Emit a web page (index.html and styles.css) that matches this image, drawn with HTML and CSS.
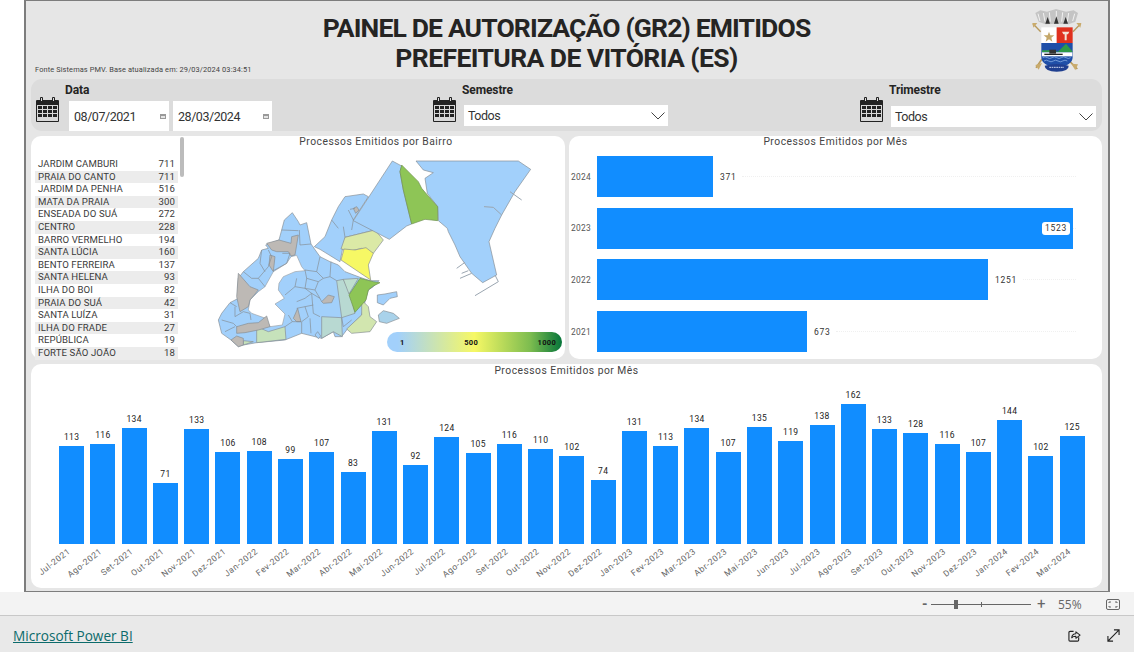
FILE: index.html
```html
<!DOCTYPE html>
<html lang="pt-BR">
<head>
<meta charset="utf-8">
<title>Painel de Autorização</title>
<link rel="stylesheet" href="styles.css">
</head>
<body>
<svg class="defs" width="0" height="0">
  <defs>
    <symbol id="cal" viewBox="0 0 23 26">
      <rect x="0" y="4" width="23" height="22" rx="1" fill="#222"/>
      <rect x="4" y="1" width="3" height="6" rx="1" fill="#222"/>
      <rect x="16" y="1" width="3" height="6" rx="1" fill="#222"/>
      <rect x="5" y="2" width="1" height="3" fill="#ddd"/>
      <rect x="17" y="2" width="1" height="3" fill="#ddd"/>
      <rect x="1" y="9" width="21" height="16" fill="#d8d8d8"/>
      <g fill="#222">
        <rect x="2" y="10" width="4" height="3"/><rect x="7" y="10" width="4" height="3"/><rect x="12" y="10" width="4" height="3"/><rect x="17" y="10" width="4" height="3"/>
        <rect x="2" y="14" width="4" height="3"/><rect x="7" y="14" width="4" height="3"/><rect x="12" y="14" width="4" height="3"/><rect x="17" y="14" width="4" height="3"/>
        <rect x="2" y="18" width="4" height="3"/><rect x="7" y="18" width="4" height="3"/><rect x="12" y="18" width="4" height="3"/><rect x="17" y="18" width="4" height="3"/>
      </g>
    </symbol>
    <symbol id="mini" viewBox="0 0 6 5">
      <rect width="6" height="5" fill="#9a9a9a"/><rect x="1" y="2" width="4" height="2" fill="#e4e4e4"/>
    </symbol>
    <symbol id="chev" viewBox="0 0 14 8">
      <path d="M0.5 0.5 L7 7 L13.5 0.5" fill="none" stroke="#444" stroke-width="1"/>
    </symbol>
  </defs>
</svg>

<main class="frame">
  <header class="head">
    <p class="source">Fonte Sistemas PMV. Base atualizada em: 29/03/2024 03:34:51</p>
    <h1 class="title">PAINEL DE AUTORIZAÇÃO (GR2) EMITIDOS<br><span class="title-2">PREFEITURA DE VITÓRIA (ES)</span></h1>
    <svg class="crest" viewBox="160 25 150 195">
      <path d="M170 40 L185 32 L205 36 L232 28 L262 36 L285 32 L298 40 L290 66 L270 74 L235 72 L200 74 L180 66Z" fill="#c4c4c4"/>
      <path d="M178 42l6 22M194 40l5 26M212 38l3 28M233 34v32M252 38l-3 28M270 40l-4 26M288 42l-6 22" stroke="#f2f2f2" stroke-width="3"/>
      <path d="M200 72 L207 52 L214 72ZM226 72 L233 50 L240 72ZM254 72 L261 52 L268 72Z" fill="#333"/>
      <path d="M163 72 L186 96" stroke="#b89a5c" stroke-width="4"/>
      <path d="M161 70 l15 0 l-12 14Z" fill="#c9ab6c"/>
      <path d="M306 72 L283 96" stroke="#b89a5c" stroke-width="4"/>
      <path d="M308 70 l-15 0 l12 14Z" fill="#c9ab6c"/>
      <path d="M190 178 L172 204" stroke="#b89a5c" stroke-width="5"/>
      <path d="M170 196 l20 -6 l-10 20Z" fill="#c9ab6c"/>
      <path d="M268 180 L296 208" stroke="#b89a5c" stroke-width="5"/>
      <path d="M298 194 l-20 -2 l12 20Z" fill="#c9ab6c"/>
      <path d="M188 83 H234 V130 H188Z" fill="#fff"/>
      <path d="M234 83 H282 V130 H234Z" fill="#e0301e"/>
      <path d="M188 130 H282 V172 Q282 198 235 204 Q188 198 188 172Z" fill="#1f4fa8"/>
      <path d="M190 152 L215 152 L238 156 L262 132 L281 155 V158 H190Z" fill="#2e9a48"/>
      <path d="M190 158 H281 V170 H190Z" fill="#fff"/>
      <path d="M197 162 H252 V166 H197Z" fill="#222"/>
      <path d="M212 150 h20 v12 h-20Z" fill="#333"/>
      <path d="M192 174 q7 -5 14 0 t14 0 t14 0 t14 0 t14 0 t14 0 M196 184 q7 -5 14 0 t14 0 t14 0 t14 0 t14 0" fill="none" stroke="#9cc0ee" stroke-width="2"/>
      <path d="M211 96 l4 11 h12 l-9 7 3 12 -10 -7 -10 7 3 -12 -9 -7 h12Z" fill="#c4a76a"/>
      <path d="M250 96 h22 l-4 8 h-14Z M258 104 h6 v18 h-6Z" fill="#f3e2d6"/>
      <path d="M198 198 Q234 188 270 198 Q272 214 234 216 Q198 214 198 198Z" fill="#1f3f90"/>
      <path d="M212 203 H256" stroke="#cfd8ef" stroke-width="3" stroke-dasharray="5 2"/>
    </svg>
  </header>

  <section class="filters">
    <div class="filter">
      <svg class="calendar"><use href="#cal"/></svg>
      <div class="filter-body">
        <div class="filter-label">Data</div>
        <div class="dates">
          <div class="date"><span>08/07/2021</span><svg class="mini"><use href="#mini"/></svg></div>
          <div class="date"><span>28/03/2024</span><svg class="mini"><use href="#mini"/></svg></div>
        </div>
      </div>
    </div>
    <div class="filter">
      <svg class="calendar"><use href="#cal"/></svg>
      <div class="filter-body">
        <div class="filter-label">Semestre</div>
        <div class="select"><span>Todos</span><svg class="chev"><use href="#chev"/></svg></div>
      </div>
    </div>
    <div class="filter">
      <svg class="calendar"><use href="#cal"/></svg>
      <div class="filter-body">
        <div class="filter-label">Trimestre</div>
        <div class="select select-low"><span>Todos</span><svg class="chev"><use href="#chev"/></svg></div>
      </div>
    </div>
  </section>

  <section class="middle">
    <article class="card bairro">
      <div class="list">
        <div class="row"><span>JARDIM CAMBURI</span><span>711</span></div>
        <div class="row"><span>PRAIA DO CANTO</span><span>711</span></div>
        <div class="row"><span>JARDIM DA PENHA</span><span>516</span></div>
        <div class="row"><span>MATA DA PRAIA</span><span>300</span></div>
        <div class="row"><span>ENSEADA DO SUÁ</span><span>272</span></div>
        <div class="row"><span>CENTRO</span><span>228</span></div>
        <div class="row"><span>BARRO VERMELHO</span><span>194</span></div>
        <div class="row"><span>SANTA LÚCIA</span><span>160</span></div>
        <div class="row"><span>BENTO FERREIRA</span><span>137</span></div>
        <div class="row"><span>SANTA HELENA</span><span>93</span></div>
        <div class="row"><span>ILHA DO BOI</span><span>82</span></div>
        <div class="row"><span>PRAIA DO SUÁ</span><span>42</span></div>
        <div class="row"><span>SANTA LUÍZA</span><span>31</span></div>
        <div class="row"><span>ILHA DO FRADE</span><span>27</span></div>
        <div class="row"><span>REPÚBLICA</span><span>19</span></div>
        <div class="row"><span>FORTE SÃO JOÃO</span><span>18</span></div>
        <div class="scrollbar"></div>
      </div>
      <div class="map-col">
        <h2 class="chart-title">Processos Emitidos por Bairro</h2>
        <svg class="map" viewBox="187 150 378 209">
          <g transform="translate(205 150) scale(.33333)" stroke="#858c93" stroke-width="2" stroke-linejoin="round" fill="none">
            <path class="blue" d="M40 510 L50 490 L75 458 L100 445 L98 415 L100 385 L115 365 L160 325 L170 300 L190 295 L182 285 L222 270 L238 210 L262 188 L280 215 L285 225 L305 218 L318 282 L345 320 L375 335 L400 345 L420 365 L465 382 L495 392 L522 392 L505 410 L490 420 L482 448 L470 495 L425 540 L410 560 L390 560 L385 545 L350 565 L290 550 L240 570 L155 578 L115 585 L100 590 L78 570 L50 550Z"/>
            <path class="hole" d="M258 320 L275 316 L290 350 L300 362 L270 365 L235 380 L222 400 L220 420 L238 445 L210 462 L240 492 L232 525 L195 530 L182 505 L140 490 L130 480 L135 450 L160 425 L180 410 L205 365 L245 340Z"/>
            <path class="blue" d="M400 170 L420 140 L475 132 L490 140 L445 210 L510 240 L420 262 L405 335 L345 298 L328 290 L360 260 L380 210Z"/>
            <path class="blue" d="M330 555 L338 545 L347 558 L340 566Z"/>
            <path class="teal" d="M395 392 L415 388 L440 440 L450 490 L410 503Z"/>
            <path class="teal2" d="M415 388 L460 385 L432 432Z"/>
            <path class="teal" d="M350 500 L410 503 L412 560 L385 545 L350 565Z"/>
            <path class="mint" d="M155 530 L190 545 L240 530 L243 568 L155 578Z"/>
            <path class="mint" d="M115 572 L145 575 L115 585Z"/>
            <path class="pale" d="M470 450 L490 470 L495 500 L515 515 L495 545 L440 550 L425 537 L470 495Z"/>
            <path class="grey" d="M100 370 L135 410 L160 420 L135 450 L130 470 L105 485 L95 440Z"/>
            <path class="grey" d="M185 280 L222 270 L258 280 L260 260 L280 255 L270 315 L258 318 L250 305 L215 305 L200 300Z"/>
            <path class="grey" d="M195 315 L210 320 L205 365 L192 345Z"/>
            <path class="grey" d="M350 455 L370 435 L388 440 L380 458 L355 460Z"/>
            <path class="grey" d="M265 505 L278 475 L288 515 L275 515Z"/>
            <path class="grey" d="M95 530 L130 520 L160 518 L185 498 L195 530 L160 540 L120 548 L95 550Z"/>
            <path class="grey" d="M78 570 L95 558 L115 565 L115 585 L100 590Z"/>
            <path class="grey" d="M445 175 L455 170 L462 180 L452 190Z"/>
            <path class="lines" d="M230 240 L280 242 M283 240 L285 285 M285 285 L318 282 M170 300 L165 340 L180 365 M190 300 L200 320 L190 350 L160 385 L180 410 M115 365 L140 385 L160 385 M75 458 L95 470 M90 470 L90 500 L115 485 L135 490 L138 510 M50 510 L85 520 L95 530 M60 545 L90 530 M232 310 L255 310 L245 340 L205 362 M300 360 L335 365 L345 320 M335 365 L355 385 L375 380 L378 335 M300 360 L305 385 L340 395 L355 385 M375 380 L395 392 M275 385 L270 410 L240 435 M305 385 L300 415 L270 410 M340 395 L330 420 L300 415 M330 420 L345 445 L350 455 M300 415 L320 430 L345 445 M320 430 L325 490 L345 500 M275 455 L300 445 L320 430 M275 475 L300 470 L325 465 M300 470 L310 500 L290 515 M290 515 L290 550 M315 505 L318 550 M410 503 L415 530 L440 510 M262 515 L288 515 M240 530 L262 515 L250 495 M430 180 L445 210 M415 230 L420 262 M440 240 L445 210 M380 210 L400 235 M435 178 L450 175"/>
            <path class="yellowgreen" d="M420 262 L510 240 L535 270 L505 310 L470 295 L440 302 L408 297Z"/>
          </g>
          <g transform="translate(340 150) scale(.33333)" stroke="#858c93" stroke-width="2" stroke-linejoin="round" fill="none">
            <path class="blue" d="M157 33 L185 48 L180 65 L190 120 L215 222 L200 228 L165 255 L148 268 L40 212Z"/>
            <path class="blue" d="M228 33 L535 33 L572 58 L525 125 L485 195 L465 235 L447 275 L470 375 L428 398 L395 370 L360 320 L345 285 L325 245 L322 235 L295 212 L293 170 L262 130 L255 85 L280 68 L250 60Z"/>
            <path class="green" d="M185 45 L180 65 L190 120 L215 222 L255 208 L293 212 L293 170 L262 135 L245 115 L235 95Z"/>
            <path class="yellow" d="M12 297 L45 300 L78 293 L100 310 L85 345 L92 390 L3 330Z"/>
            <path class="green" d="M60 385 L100 395 L120 398 L100 408 L85 420 L78 450 L45 487 L27 435Z"/>
            <path class="blue" d="M112 435 L135 432 L170 425 L172 440 L150 445 L130 465 L112 458Z"/>
            <path class="isle" d="M115 495 L130 482 L160 490 L178 505 L140 520 L118 515Z"/>
            <path class="pier" d="M510 125 L545 150 M432 170 L460 172 L485 195 M350 355 L375 337 M365 370 L385 362 M360 385 L395 370 M405 437 L475 395 L465 375"/>
          </g>
        </svg>
        <div class="legend"><span>1</span><span>500</span><span>1000</span></div>
      </div>
    </article>

    <article class="card months">
      <h2 class="chart-title">Processos Emitidos por Mês</h2>
      <div class="hbars">
        <div class="hrow"><span class="year">2024</span><div class="hbar" style="width:116px"></div><span class="hval">371</span><i class="dots"></i></div>
        <div class="hrow"><span class="year">2023</span><div class="hbar" style="width:476px"><span class="hval hval-in">1523</span></div><i class="dots"></i></div>
        <div class="hrow"><span class="year">2022</span><div class="hbar" style="width:391px"></div><span class="hval">1251</span><i class="dots"></i></div>
        <div class="hrow"><span class="year">2021</span><div class="hbar" style="width:210px"></div><span class="hval">673</span><i class="dots"></i></div>
      </div>
    </article>
  </section>

  <section class="card timeline">
    <h2 class="chart-title">Processos Emitidos por Mês</h2>
    <div class="cols">
      <div class="col"><span class="v">113</span><div class="bar" style="height:97.6px"></div><div class="xl"><span>Jul-2021</span></div></div>
      <div class="col"><span class="v">116</span><div class="bar" style="height:100.2px"></div><div class="xl"><span>Ago-2021</span></div></div>
      <div class="col"><span class="v">134</span><div class="bar" style="height:115.8px"></div><div class="xl"><span>Set-2021</span></div></div>
      <div class="col"><span class="v">71</span><div class="bar" style="height:61.3px"></div><div class="xl"><span>Out-2021</span></div></div>
      <div class="col"><span class="v">133</span><div class="bar" style="height:114.9px"></div><div class="xl"><span>Nov-2021</span></div></div>
      <div class="col"><span class="v">106</span><div class="bar" style="height:91.6px"></div><div class="xl"><span>Dez-2021</span></div></div>
      <div class="col"><span class="v">108</span><div class="bar" style="height:93.3px"></div><div class="xl"><span>Jan-2022</span></div></div>
      <div class="col"><span class="v">99</span><div class="bar" style="height:85.5px"></div><div class="xl"><span>Fev-2022</span></div></div>
      <div class="col"><span class="v">107</span><div class="bar" style="height:92.4px"></div><div class="xl"><span>Mar-2022</span></div></div>
      <div class="col"><span class="v">83</span><div class="bar" style="height:71.7px"></div><div class="xl"><span>Abr-2022</span></div></div>
      <div class="col"><span class="v">131</span><div class="bar" style="height:113.2px"></div><div class="xl"><span>Mai-2022</span></div></div>
      <div class="col"><span class="v">92</span><div class="bar" style="height:79.5px"></div><div class="xl"><span>Jun-2022</span></div></div>
      <div class="col"><span class="v">124</span><div class="bar" style="height:107.1px"></div><div class="xl"><span>Jul-2022</span></div></div>
      <div class="col"><span class="v">105</span><div class="bar" style="height:90.7px"></div><div class="xl"><span>Ago-2022</span></div></div>
      <div class="col"><span class="v">116</span><div class="bar" style="height:100.2px"></div><div class="xl"><span>Set-2022</span></div></div>
      <div class="col"><span class="v">110</span><div class="bar" style="height:95px"></div><div class="xl"><span>Out-2022</span></div></div>
      <div class="col"><span class="v">102</span><div class="bar" style="height:88.1px"></div><div class="xl"><span>Nov-2022</span></div></div>
      <div class="col"><span class="v">74</span><div class="bar" style="height:63.9px"></div><div class="xl"><span>Dez-2022</span></div></div>
      <div class="col"><span class="v">131</span><div class="bar" style="height:113.2px"></div><div class="xl"><span>Jan-2023</span></div></div>
      <div class="col"><span class="v">113</span><div class="bar" style="height:97.6px"></div><div class="xl"><span>Fev-2023</span></div></div>
      <div class="col"><span class="v">134</span><div class="bar" style="height:115.8px"></div><div class="xl"><span>Mar-2023</span></div></div>
      <div class="col"><span class="v">107</span><div class="bar" style="height:92.4px"></div><div class="xl"><span>Abr-2023</span></div></div>
      <div class="col"><span class="v">135</span><div class="bar" style="height:116.6px"></div><div class="xl"><span>Mai-2023</span></div></div>
      <div class="col"><span class="v">119</span><div class="bar" style="height:102.8px"></div><div class="xl"><span>Jun-2023</span></div></div>
      <div class="col"><span class="v">138</span><div class="bar" style="height:119.2px"></div><div class="xl"><span>Jul-2023</span></div></div>
      <div class="col"><span class="v">162</span><div class="bar" style="height:140px"></div><div class="xl"><span>Ago-2023</span></div></div>
      <div class="col"><span class="v">133</span><div class="bar" style="height:114.9px"></div><div class="xl"><span>Set-2023</span></div></div>
      <div class="col"><span class="v">128</span><div class="bar" style="height:110.6px"></div><div class="xl"><span>Out-2023</span></div></div>
      <div class="col"><span class="v">116</span><div class="bar" style="height:100.2px"></div><div class="xl"><span>Nov-2023</span></div></div>
      <div class="col"><span class="v">107</span><div class="bar" style="height:92.4px"></div><div class="xl"><span>Dez-2023</span></div></div>
      <div class="col"><span class="v">144</span><div class="bar" style="height:124.4px"></div><div class="xl"><span>Jan-2024</span></div></div>
      <div class="col"><span class="v">102</span><div class="bar" style="height:88.1px"></div><div class="xl"><span>Fev-2024</span></div></div>
      <div class="col"><span class="v">125</span><div class="bar" style="height:108px"></div><div class="xl"><span>Mar-2024</span></div></div>
    </div>
  </section>
</main>

<div class="zoombar">
  <span class="minus">-</span>
  <div class="slider"><i class="thumb"></i><i class="tick"></i></div>
  <span class="plus">+</span>
  <span class="pct">55%</span>
  <svg class="fit" viewBox="0 0 14 11"><rect x=".5" y=".5" width="13" height="10" rx="1.5" fill="none" stroke="#666"/><path d="M3 4V3H5M9 3H11V4M3 7V8H5M9 8H11V7" fill="none" stroke="#666"/></svg>
</div>
<footer class="footer">
  <a class="pbi" href="#">Microsoft Power BI</a>
  <div class="foot-icons">
    <svg class="ficon" viewBox="0 0 14 14"><path d="M6 2.5H2.2A1.2 1.2 0 0 0 1 3.7V11.8A1.2 1.2 0 0 0 2.2 13H10.3A1.2 1.2 0 0 0 11.5 11.8V9" fill="none" stroke="#222" stroke-width="1.2"/><path d="M4 9.5C4.2 6.8 6 5.3 8.5 5.2V3L13 6.6L8.5 10V7.7C6.6 7.6 5 8.2 4 9.5Z" fill="none" stroke="#222" stroke-width="1.1" stroke-linejoin="round"/></svg>
    <svg class="ficon" viewBox="0 0 14 14"><path d="M1 13L13 1M7.5 1H13V6.5M1 7.5V13H6.5" fill="none" stroke="#222" stroke-width="1.2"/></svg>
  </div>
</footer>
</body>
</html>
```
FILE: styles.css
```css
* { box-sizing: border-box; }
html, body { margin: 0; padding: 0; }
body {
  width: 1134px;
  height: 652px;
  overflow: hidden;
  background: #fff;
  font-family: Roboto, "Liberation Sans", sans-serif;
  color: #252423;
}
.defs { display: block; height: 0; }

.frame {
  width: 1086px;
  height: 592px;
  margin-left: 24px;
  padding: 0 6px 0 5px;
  background: #e6e6e6;
  border: 1px solid #7d7d7d;
  border-width: 1px 2px 1px 2px;
  display: flex;
  flex-direction: column;
}

.head {
  height: 78px;
  display: grid;
  grid-template-columns: 1fr auto 1fr;
  position: relative;
}
.source {
  margin: 0 0 4px 4px;
  align-self: end;
  font-size: 7.4px;
  line-height: 10px;
  color: #444;
  letter-spacing: .12px;
  white-space: nowrap;
}
.title {
  margin: 0;
  padding-top: 12px;
  font-size: 26.5px;
  line-height: 30px;
  font-weight: 700;
  letter-spacing: -.85px;
  text-align: center;
  color: #252423;
  white-space: nowrap;
}
.title-2 { letter-spacing: -.6px; }
.crest {
  width: 50px;
  height: 65px;
  justify-self: end;
  margin: 7px 20px 0 0;
}

.filters {
  height: 52px;
  background: #dcdcdc;
  border-radius: 11px;
  padding-left: 5px;
  display: grid;
  grid-template-columns: 397px 427px 1fr;
  flex: none;
}
.filter { display: flex; }
.calendar { width: 23px; height: 26px; margin: 17px 6px 0 0; flex: none; }
.filter-body { flex: 1; min-width: 0; }
.filter-label {
  font-size: 12px;
  line-height: 14px;
  font-weight: 700;
  padding-top: 4px;
  letter-spacing: -.1px;
  color: #252423;
}
.dates { display: flex; gap: 4px; margin: 4px 0 0 4px; }
.date {
  width: 100px;
  height: 30px;
  background: #fff;
  padding: 0 3px 0 5px;
  display: flex;
  align-items: center;
  justify-content: space-between;
  font-size: 12.5px;
  letter-spacing: -.45px;
  color: #333;
}
.date + .date { width: 99px; }
.mini { width: 6px; height: 5px; }
.select {
  width: 204px;
  height: 21px;
  margin: 8px 0 0 2px;
  background: #fff;
  padding: 0 3px 0 4px;
  display: flex;
  align-items: center;
  justify-content: space-between;
  font-size: 12.5px;
  letter-spacing: -.5px;
  color: #333;
}
.select-low { margin-top: 9px; width: 205px; }
.chev { width: 14px; height: 8px; }

.middle {
  display: flex;
  gap: 4px;
  margin-top: 5px;
  height: 223px;
  flex: none;
}
.card { background: #fff; border-radius: 10px; }
.bairro { width: 534px; display: flex; }
.months { flex: 1; display: flex; flex-direction: column; }
.chart-title {
  margin: 0;
  height: 14px;
  font-size: 10.3px;
  line-height: 11px;
  font-weight: 400;
  letter-spacing: .5px;
  text-align: center;
  color: #444;
}
.list {
  width: 156px;
  flex: none;
  padding: 22px 9px 0 4px;
  position: relative;
}
.row {
  height: 12.6px;
  padding: 0 3px;
  display: flex;
  justify-content: space-between;
  font-size: 9.6px;
  line-height: 12.6px;
  letter-spacing: .1px;
  color: #3a3a3a;
  width: 143px;
}
.row:nth-child(even) { background: #ececec; }
.scrollbar {
  position: absolute;
  left: 149px;
  top: 1px;
  width: 4px;
  height: 40px;
  border-radius: 2px;
  background: #bcbcbc;
}
.map-col { flex: 1; position: relative; display: flex; flex-direction: column; }
.map { width: 378px; height: 209px; display: block; }
.blue { fill: #a2d0fb; }
.hole { fill: #fff; stroke: #9aa0a6; }
.isle { fill: #a9d2ea; }
.teal { fill: #b8d9d2; }
.teal2 { fill: #bfdfcf; }
.mint { fill: #c6e2bb; }
.pale { fill: #d2e6af; }
.yellowgreen { fill: #dbe9a6; }
.grey { fill: #bdb9b5; }
.green { fill: #8ec556; stroke: #6d8f4f; }
.yellow { fill: #f6f865; }
.lines { fill: none; }
.pier { fill: none; stroke: #9aa5b0; stroke-width: 3; }
.legend {
  position: absolute;
  right: 3px;
  bottom: 7px;
  width: 175px;
  height: 20px;
  border-radius: 10px;
  background: linear-gradient(90deg, #a2d0fb 0%, #a2d0fb 6%, #f6f865 50%, #7cbc4f 82%, #06753a 100%);
  padding: 0 6px 0 13px;
  display: flex;
  align-items: center;
  justify-content: space-between;
  font-size: 7.5px;
  font-weight: 700;
  letter-spacing: .3px;
  color: #111;
}

.hbars {
  display: flex;
  flex-direction: column;
  gap: 10.7px;
  padding-top: 6px;
}
.hrow { display: flex; align-items: center; height: 41px; padding-left: 2px; }
.year { width: 26px; font-size: 8.4px; letter-spacing: .3px; color: #555; flex: none; }
.hbar {
  height: 41px;
  background: #118dff;
  display: flex;
  align-items: center;
  justify-content: flex-end;
  flex: none;
}
.hval {
  font-size: 8.5px;
  letter-spacing: .7px;
  color: #333;
  margin: 0 6px 0 7px;
  flex: none;
}
.hval-in {
  background: #fff;
  border-radius: 3px;
  margin: 0 3px 0 0;
  padding: 1px 3px;
  line-height: 11px;
}
.dots { flex: 1; border-top: 1px dotted #f0f0f0; margin-right: 26px; }

.timeline { height: 224px; margin-top: 5px; flex: none; padding-top: 1px; }
.cols {
  display: grid;
  grid-template-columns: repeat(33, 31.28px);
  align-items: end;
  padding-left: 25px;
  height: 209px;
}
.col { display: flex; flex-direction: column; align-items: center; }
.v { font-size: 8.5px; line-height: 12px; letter-spacing: .35px; margin-bottom: 3px; color: #222; }
.bar { width: 25px; background: #118dff; }
.xl {
  height: 44px;
  width: 100%;
  display: flex;
  justify-content: flex-end;
  padding: 2px 18px 0 0;
}
.xl span {
  flex: none;
  font-size: 8.5px;
  line-height: 9px;
  height: 9px;
  letter-spacing: .55px;
  color: #666;
  white-space: nowrap;
  transform: rotate(-38deg);
  transform-origin: right center;
}

.zoombar {
  height: 23px;
  padding-top: 1px;
  background: #f3f3f3;
  display: flex;
  align-items: center;
  padding-left: 922px;
  color: #666;
}
.minus { width: 9px; font-size: 14px; font-weight: 700; }
.slider { width: 100px; height: 1px; background: #666; position: relative; }
.thumb {
  position: absolute;
  left: 23px;
  top: -4px;
  width: 4px;
  height: 9px;
  background: #666;
}
.tick {
  position: absolute;
  left: 50px;
  top: -2px;
  width: 1px;
  height: 5px;
  background: #666;
}
.plus { margin-left: 6px; width: 21px; font-size: 15px; }
.pct { font-size: 12px; width: 48px; font-family: "Open Sans", sans-serif; }
.fit { width: 14px; height: 11px; }

.footer {
  height: 37px;
  background: #e9e9e9;
  border-top: 1px solid #c8c8c8;
  display: flex;
  align-items: center;
  justify-content: space-between;
  padding: 3px 14px 0 13px;
}
.pbi {
  font-family: "Open Sans", sans-serif;
  font-size: 13.6px;
  color: #0c6b6b;
  text-decoration: underline;
}
.foot-icons { display: flex; gap: 26px; }
.ficon { width: 13px; height: 13px; }
```
